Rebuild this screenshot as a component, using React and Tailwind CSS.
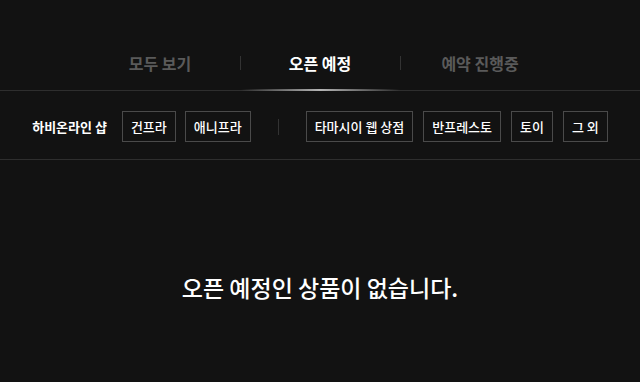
import React, { useState } from 'react';

const tabs = ['모두 보기', '오픈 예정', '예약 진행중'];
const shopsLeft = ['건프라', '애니프라'];
const shopsRight = ['타마시이 웹 상점', '반프레스토', '토이', '그 외'];

const FilterButton = ({ label }) => (
  <button className="h-[31px] px-[8px] border border-[#4a4a4a] text-[13px] text-white font-medium flex items-center whitespace-nowrap">
    {label}
  </button>
);

const App = () => {
  const [active, setActive] = useState(1);

  return (
    <div
      className="min-h-screen bg-[#121212] text-white"
      style={{ fontFamily: '"Noto Sans CJK KR", "Noto Sans", sans-serif' }}
    >
      {/* 탭 */}
      <div className="pt-[36px] border-b border-[#2e2e2e]">
        <div className="flex justify-center">
          {tabs.map((tab, i) => (
            <React.Fragment key={tab}>
              {i > 0 && <div className="w-px h-[14px] bg-[#333] self-center" />}
              <button
                onClick={() => setActive(i)}
                className={`relative w-[159px] h-[54px] flex items-center justify-center text-[16px] font-bold ${
                  active === i ? 'text-white' : 'text-[#5a5a5a]'
                }`}
              >
                {tab}
                {active === i && (
                  <span className="absolute left-0 right-0 -bottom-px h-[2px] bg-gradient-to-r from-transparent via-[#b5b5b5] to-transparent" />
                )}
              </button>
            </React.Fragment>
          ))}
        </div>
      </div>

      {/* 샵 필터 */}
      <div className="flex items-center justify-center pt-[20px] pb-[17px] border-b border-[#2e2e2e]">
        <span className="text-[13px] font-bold mr-[15px]">하비온라인 샵</span>
        <div className="flex gap-[9px]">
          {shopsLeft.map((s) => (
            <FilterButton key={s} label={s} />
          ))}
        </div>
        <div className="w-px h-[16px] bg-[#333] mx-[27px]" />
        <div className="flex gap-[10px]">
          {shopsRight.map((s) => (
            <FilterButton key={s} label={s} />
          ))}
        </div>
      </div>

      {/* 빈 상태 */}
      <div className="pt-[111px] text-center">
        <p className="text-[23px] leading-[32px] font-medium">오픈 예정인 상품이 없습니다.</p>
      </div>
    </div>
  );
};

export default App;
